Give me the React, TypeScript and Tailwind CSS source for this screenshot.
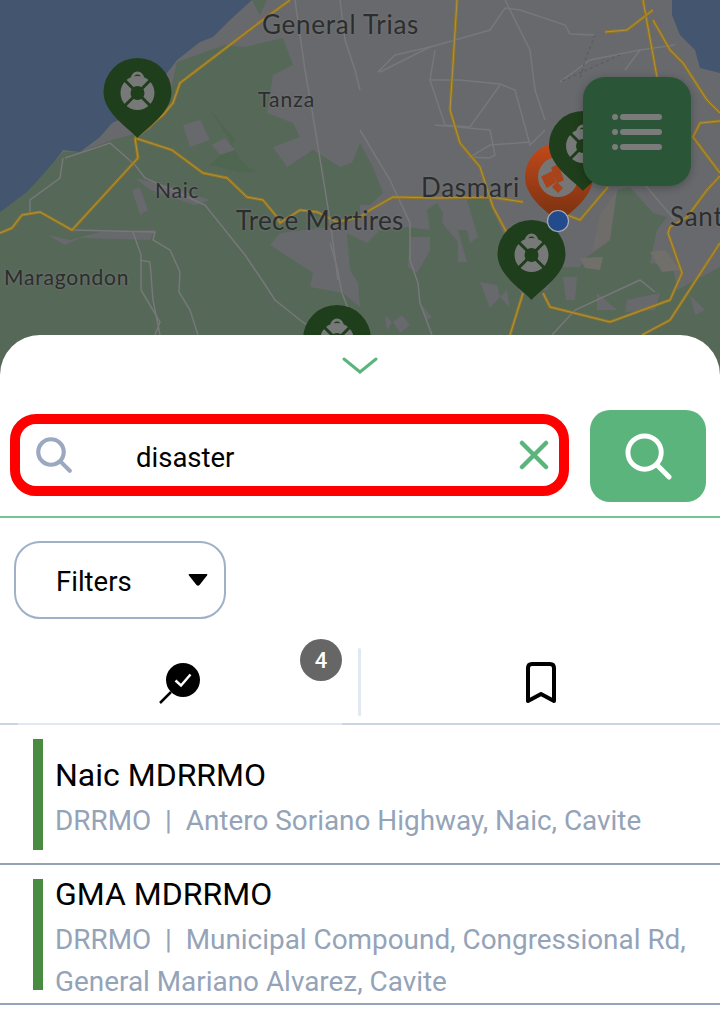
const goldRoads = [
  "M290 0L260 22L180 83L173 103L163 115L135 138",
  "M135 138L172 150L203 173L227 178L247 197L263 200L277 217L280 223L300 210L317 212L337 222L360 217L370 210L393 197L437 198L490 197L523 202",
  "M135 138L138 158L72 230L40 212L22 215L12 228L0 233",
  "M457 0L452 80L450 110L460 143L480 167L493 207L507 233",
  "M523 293L510 335",
  "M643 0L657 77",
  "M653 10L627 30L605 32",
  "M653 20L670 50L683 63L707 100L720 113",
  "M720 121L700 123L693 137L720 173",
  "M608 187L580 220L567 215",
  "M543 293L550 307L610 322L670 300L682 273L668 233L670 227L687 217L707 190L720 176",
  "M642 335L670 320L720 243",
];

const minorRoads = [
  "M70 230L155 232L153 240L170 250L180 272L179 292L190 310L198 335",
  "M133 232L141 255L141 290L150 305L160 322L155 335",
  "M140 260L150 262L153 300L160 335",
  "M63 158L60 178L30 200L30 215",
  "M65 158L110 143L135 165L145 178L205 205L245 255L262 280L275 300L300 320L335 345",
  "M295 0L305 70L312 110L330 220L338 280",
  "M340 0L345 40L355 70L360 90",
  "M380 72L430 47L455 40L490 30L505 8L520 10L565 25L570 34L595 35",
  "M378 72L395 55L430 47",
  "M435 50L430 80L460 80L500 84L515 90L530 145L545 130",
  "M430 80L445 125L470 127L500 85",
  "M360 130L390 180L410 223L410 260L418 283L420 303L432 335",
  "M330 243L337 267L342 293L350 313L365 335",
  "M435 125L490 130L495 155L490 158L470 157L490 145L530 142",
  "M625 70L640 50L675 45",
  "M560 82L590 60L640 50",
  "M505 0L530 50L535 90L545 120",
  "M675 220L645 185",
  "M552 335L575 310L640 280L655 292",
];

function Lifebuoy({ cx, cy, band }: { cx: number; cy: number; band: string }) {
  return (
    <g>
      <path
        d={`M${cx - 5} ${cy - 15}a5 5 0 0 1 10 0`}
        fill="none"
        stroke="#777878"
        strokeWidth="3"
      />
      <circle cx={cx} cy={cy} r="17" fill="#777878" />
      <path
        d={`M${cx - 13} ${cy - 13}L${cx + 13} ${cy + 13}M${cx + 13} ${cy - 13}L${cx - 13} ${cy + 13}`}
        stroke={band}
        strokeWidth="3"
      />
      <circle cx={cx} cy={cy} r="7" fill={band} />
    </g>
  );
}

function GreenPin({ cx, top }: { cx: number; top: number }) {
  const cy = top + 34;
  return (
    <g>
      <path
        d={`M${cx} ${top + 80}C${cx - 6} ${top + 72} ${cx - 34} ${top + 56} ${cx - 34} ${cy}A34 34 0 0 1 ${cx + 34} ${cy}C${cx + 34} ${top + 56} ${cx + 6} ${top + 72} ${cx} ${top + 80}Z`}
        fill="#1f3e1b"
      />
      <Lifebuoy cx={cx} cy={cy + 1} band="#1f3e1b" />
    </g>
  );
}

function MapLayer() {
  return (
    <svg viewBox="0 0 720 400" className="h-[400px] w-[720px]">
      <defs>
        <linearGradient id="orangePin" x1="0" y1="0" x2="0" y2="1">
          <stop offset="0" stopColor="#c2491b" />
          <stop offset="1" stopColor="#76300f" />
        </linearGradient>
      </defs>
      <rect width="720" height="400" fill="#68696c" />
      {/* water */}
      <path
        d="M0 0H252L230 20L213 37L200 42L177 60L167 73L133 113L112 123L100 137L80 152L63 150L33 190L27 192L10 210L0 212Z"
        fill="#44556f"
      />
      <path d="M672 0H720V73L700 68L695 50L680 35L672 15Z" fill="#44556f" />
      {/* green land */}
      <path
        d="M0 212L27 192L63 152L80 152L112 140L150 130L167 108L177 62L225 45L245 47L283 38L293 65L273 75L267 113L293 123L300 137L273 147L287 167L313 150L340 167L360 160L360 215L345 225L280 233L270 245L313 273L310 287L343 293L360 307V400H0Z"
        fill="#566858"
      />
      <path d="M252 0H267L260 15Z" fill="#566858" />
      <path d="M360 143L373 167L383 193L370 205L355 205L345 180Z" fill="#566858" />
      <path
        d="M347 233L367 243L380 230L407 227L430 230L427 210L437 203L443 213L442 223L458 242L458 262L467 262L458 230L467 230L470 243L478 237L467 200L487 197L503 233L520 293L547 290L560 267L580 267L587 257L607 243L617 190L630 187L653 213L667 217L657 230L650 263L673 267L677 290L720 267V400H360V307L358 283L350 270Z"
        fill="#566858"
      />
      <path d="M208 107L230 140L240 160L255 172L240 172L210 165L235 140Z" fill="#4f6651" />
      {/* gray patches inside the green */}
      <path d="M183 125L200 120L210 140L190 147Z M212 145L225 138L235 150L220 155Z M135 178L165 185L210 200L195 205L150 190Z M132 190L140 215L148 210L140 188Z" fill="#68696c" />
      <path d="M48 235L70 240L100 232L155 230L150 240L80 238L65 245Z" fill="#68696c" />
      <path d="M410 237L430 237L430 250L417 273L408 267Z M480 282L497 285L500 297L490 308Z M500 297L507 290L510 308Z M385 315L392 322L387 330Z M393 322L402 315L410 325L400 333Z M420 303L432 317L427 320Z" fill="#68696c" />
      <path d="M563 277L577 277L575 300L566 300Z M597 293L617 310L597 310Z M627 300L660 293L655 310L625 312Z M690 295L705 310L695 315Z" fill="#68696c" />
      <path d="M650 252L665 250L680 270L662 272Z M580 258L603 257L600 270L585 268Z" fill="#716f69" />
      <path d="M617 190L610 240L592 252L600 215Z" fill="#6f6d6a" />
      {minorRoads.map((d) => (
        <path key={d} d={d} fill="none" stroke="#767879" strokeWidth="1.5" />
      ))}
      <path d="M595 35L585 60L580 80M620 55L560 82" fill="none" stroke="#55585c" strokeWidth="1" strokeDasharray="3 3" />
      {goldRoads.map((d) => (
        <g key={d}>
          <path d={d} fill="none" stroke="#94761f" strokeWidth="3" />
          <path d={d} fill="none" stroke="#ad9248" strokeWidth="1" />
        </g>
      ))}
      <GreenPin cx={137.5} top={58} />
      <GreenPin cx={337} top={305} />
      {/* orange pin under the other pin */}
      <path
        d="M559 223C553 215 525 200 525 177A34 34 0 0 1 593 177C593 200 565 215 559 223Z"
        fill="url(#orangePin)"
      />
      <circle cx="558" cy="177" r="20" fill="#767676" />
      <path d="M542 177L552 172L555 182L547 187Z M552 168L558 165L563 180L557 182Z M553 187L557 183L562 188L558 192Z" fill="#a8441c" stroke="#a8441c" strokeWidth="1.5" strokeLinejoin="round" />
      <GreenPin cx={583} top={111} />
      <GreenPin cx={531.5} top={220} />
      <circle cx="558" cy="221" r="10.5" fill="#234a8c" stroke="#a8adb5" strokeWidth="1.2" />
    </svg>
  );
}

function MapLabel({ text, className }: { text: string; className: string }) {
  return (
    <span
      className={`absolute whitespace-nowrap font-[Lato,sans-serif] text-[#2c2d2e] [text-shadow:0_0_3px_#77797a] ${className}`}
    >
      {text}
    </span>
  );
}

function SearchIcon({ className, stroke, width }: { className: string; stroke: string; width: number }) {
  return (
    <svg viewBox="0 0 48 48" className={className} fill="none" stroke={stroke} strokeWidth={width} strokeLinecap="round">
      <circle cx="20" cy="20" r="17" />
      <path d="M32.5 32.5L45 45" />
    </svg>
  );
}

export default function App() {
  return (
    <div className="relative h-[1015px] w-[720px] overflow-hidden bg-white font-[Roboto,sans-serif]">
      <div className="absolute left-0 top-0 h-[400px] w-[720px]">
        <MapLayer />
        <MapLabel text="General Trias" className="left-[262px] top-[9px] text-[26px] leading-[30px] tracking-[0.75px]" />
        <MapLabel text="Tanza" className="left-[258px] top-[87px] text-[21px] leading-[24px] tracking-[1px]" />
        <MapLabel text="Naic" className="left-[155px] top-[178px] text-[21px] leading-[24px] tracking-[0.8px]" />
        <MapLabel text="Trece Martires" className="left-[236px] top-[205px] text-[26px] leading-[30px] tracking-[0.3px]" />
        <MapLabel text="Maragondon" className="left-[4px] top-[265px] text-[21px] leading-[24px] tracking-[0.8px]" />
        <MapLabel text="Dasmari" className="left-[421px] top-[172px] text-[26px] leading-[30px] tracking-[0.75px]" />
        <MapLabel text="Sant" className="left-[670px] top-[201px] text-[26px] leading-[30px] tracking-[0.75px]" />
      </div>

      <button className="absolute left-[583px] top-[77px] flex h-[109px] w-[108px] flex-col items-center justify-center gap-[9px] rounded-[22px] bg-[#2a5637] shadow-[0_2px_8px_rgba(0,0,0,0.25)]">
        {[0, 1, 2].map((i) => (
          <span key={i} className="flex items-center gap-[2px]">
            <span className="h-[6px] w-[6px] rounded-full bg-[#7b7b7b]" />
            <span className="h-[6px] w-[42px] rounded-full bg-[#7b7b7b]" />
          </span>
        ))}
      </button>

      <div className="relative mt-[335px] h-[680px] rounded-t-[40px] bg-white">
        <div className="flex h-[75px] justify-center pt-[22px]">
          <svg viewBox="0 0 36 18" className="h-[18px] w-[36px]" fill="none" stroke="#5ab47b" strokeWidth="3" strokeLinecap="round">
            <path d="M2 2L18 15L34 2" />
          </svg>
        </div>

        <div className="flex h-[108px] items-start border-b-2 border-[#72c490]">
          <div className="ml-[10px] mt-[4px] flex h-[82px] w-[559px] items-center rounded-[26px] border-[10px] border-[#ff0000] bg-white">
            <SearchIcon className="ml-[16px] h-[36px] w-[36px]" stroke="#9aa8c0" width={5.5} />
            <input
              readOnly
              value="disaster"
              className="ml-[64px] mt-[5px] w-[383px] bg-transparent text-[27.5px] leading-[34px] text-black outline-none"
            />
            <svg viewBox="0 0 30 30" className="h-[30px] w-[30px]" fill="none" stroke="#5ab47b" strokeWidth="4.5" strokeLinecap="round">
              <path d="M3 3L27 27M27 3L3 27" />
            </svg>
          </div>
          <button className="ml-[21px] flex h-[92px] w-[116px] items-center justify-center rounded-[20px] bg-[#5ab47b]">
            <SearchIcon className="h-[47px] w-[47px]" stroke="#ffffff" width={5} />
          </button>
        </div>

        <div className="ml-[14px] mt-[23px] flex h-[78px] w-[212px] items-center rounded-[26px] border-2 border-[#9fb0c8] bg-white pl-[40px] pr-[16px]">
          <span className="mt-[3px] flex-1 text-[27.5px] leading-[32px] text-black">Filters</span>
          <svg viewBox="0 0 20 12" className="h-[12px] w-[20px]" fill="#000000">
            <path d="M1.5 0H18.5Q20 0 19 1.5L11.5 11Q10 12.5 8.5 11L1 1.5Q0 0 1.5 0Z" />
          </svg>
        </div>

        <div className="relative mt-[22px] flex h-[84px] items-center border-b-2 border-[#cbd5e1]">
          <div className="absolute bottom-[-2px] left-[18px] h-[2px] w-[324px] bg-[#e2e8f0]" />
          <div className="relative flex h-[84px] w-[342px] items-center justify-center pl-[18px]">
            <svg viewBox="0 0 42 44" className="mt-[4px] h-[44px] w-[42px]">
              <circle cx="24" cy="18" r="17" fill="#000000" />
              <path d="M12 30L1 41" stroke="#000000" strokeWidth="2.5" />
              <path d="M16.5 18.5L22 23.5L31.5 12.5" fill="none" stroke="#ffffff" strokeWidth="2.5" />
            </svg>
            <span className="absolute right-0 top-[-1px] flex h-[42px] w-[42px] items-center justify-center rounded-full bg-[#666666] text-[22px] font-medium text-white">
              4
            </span>
          </div>
          <div className="ml-[16px] h-[68px] w-[3px] rounded-full bg-[#e2e8f0]" />
          <div className="flex h-[84px] flex-1 items-center justify-center pl-[1px]">
            <svg viewBox="0 0 30 42" className="mt-[2px] h-[42px] w-[30px]" fill="none" stroke="#000000" strokeWidth="4" strokeLinejoin="round">
              <path d="M6 2H24Q28 2 28 6V39L15 32L2 39V6Q2 2 6 2Z" />
            </svg>
          </div>
        </div>

        <div className="flex h-[140px] items-stretch border-b-2 border-[#94a3b8] pb-[13px] pl-[33px] pt-[14px]">
          <div className="w-[10px] bg-[#4a8b42]" />
          <div className="ml-[12px] pt-[16px]">
            <div className="text-[32px] font-[450] leading-[40px] text-black">Naic MDRRMO</div>
            <div className="mt-[5px] whitespace-pre text-[27.9px] leading-[42px] text-[#94a3b8]">
              DRRMO  |  Antero Soriano Highway, Naic, Cavite
            </div>
          </div>
        </div>

        <div className="flex h-[140px] items-stretch border-b-2 border-[#94a3b8] pb-[13px] pl-[33px] pt-[14px]">
          <div className="w-[10px] bg-[#4a8b42]" />
          <div className="ml-[12px] mt-[-5px]">
            <div className="text-[32px] font-[450] leading-[40px] text-black">GMA MDRRMO</div>
            <div className="mt-[5px] whitespace-pre-wrap text-[27.9px] leading-[42px] text-[#94a3b8]">
              DRRMO  |  Municipal Compound, Congressional Rd,{"\n"}General Mariano Alvarez, Cavite
            </div>
          </div>
        </div>
      </div>
    </div>
  );
}
